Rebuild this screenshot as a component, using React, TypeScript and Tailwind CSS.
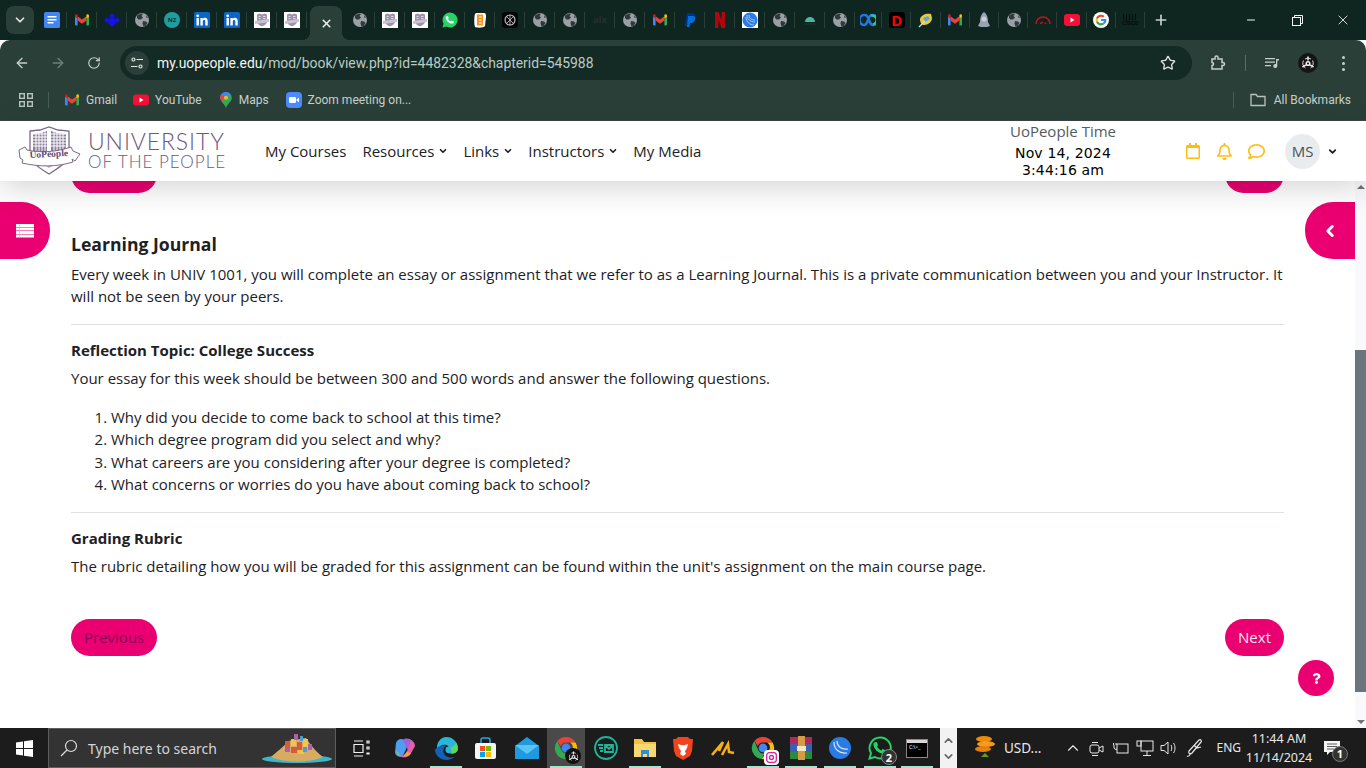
import { ArrowLeft, ArrowRight, ChevronDown, ChevronLeft, ChevronUp, Minus, Plus, RotateCw, Star, X } from 'lucide-react';
import { FaQuestion, FaRegBell, FaRegCalendar, FaRegComment } from 'react-icons/fa';
import type { ReactNode } from 'react';

const Gmail = ({ s = 16 }: { s?: number }) => (
  <svg width={s} height={s} viewBox="0 0 16 16">
    <path d="M1 13.500V4l2.600 1.600v7.900H2a1 1 0 0 1-1-1z" fill="#4285f4" />
    <path d="M15 13.500V4l-2.600 1.600v7.900H14a1 1 0 0 0 1-1z" fill="#34a853" />
    <path d="M3.600 8.600V4.200L8 7.600l4.400-3.400v4.400L8 11.800z" fill="#ea4335" />
    <path d="M1 5V3.800c0-1.200 1.400-1.900 2.400-1.100l.2.2v3.400z" fill="#c5221f" />
    <path d="M15 5V3.800c0-1.200-1.400-1.900-2.400-1.100l-.2.2v3.400z" fill="#fbbc04" />
  </svg>
);

const Globe = () => (
  <svg width="16" height="16" viewBox="0 0 16 16">
    <circle cx="8" cy="8" r="7" fill="#9aa0a6" />
    <path d="M3 3.500c2-1.500 4-2 6-1.600L7.500 4 9 5.500 7 7.500H4.500L3 6zM9 9l3 .5 1.500 1.500-2 3-2 .5-1-3zM12 3l2 2.500-1.500.5z" fill="#2f3a38" />
  </svg>
);

const LinkedIn = () => (
  <svg width="16" height="16" viewBox="0 0 16 16">
    <rect width="16" height="16" rx="1.500" fill="#0a66c2" />
    <rect x="2.500" y="6" width="2.400" height="7.500" fill="#fff" />
    <circle cx="3.700" cy="3.800" r="1.400" fill="#fff" />
    <path d="M6.400 6h2.300v1.100c.5-.8 1.300-1.300 2.300-1.300 2 0 2.700 1.300 2.700 3.300v4.400h-2.400V9.600c0-1-.3-1.600-1.200-1.600S8.800 8.700 8.800 9.600v3.900H6.400z" fill="#fff" />
  </svg>
);

const Crest = () => (
  <svg width="16" height="16" viewBox="0 0 16 16">
    <rect width="16" height="16" fill="#fff" />
    <path d="M3 2.500l2.500-1L8 2.500l2.500-1 2.500 1v7c0 2.500-3 4-5 5-2-1-5-2.500-5-5z" fill="#9d93aa" />
    <path d="M4.500 4h2v1h-2zM9 4h2.500v1H9zM4.500 6h2v1h-2zM9 6h2.500v1H9z" fill="#dcd7e2" />
    <path d="M1 9l14-2v3L1 12z" fill="#c9c3d1" />
  </svg>
);

const Chrome = ({ s = 22 }: { s?: number }) => (
  <svg width={s} height={s} viewBox="0 0 24 24">
    <path d="M12 1a11 11 0 0 1 9.530 5.500H12a5.500 5.500 0 0 0-5.200 3.700L3.400 5A11 11 0 0 1 12 1z" fill="#ea4335" />
    <path d="M3.400 5l4.200 9.800a5.500 5.500 0 0 0 6.200 2.400L10.500 23A11 11 0 0 1 3.400 5z" fill="#34a853" />
    <path d="M21.530 6.500A11 11 0 0 1 10.500 23l4.800-6.600a5.500 5.500 0 0 0 .9-9.900z" fill="#fbbc04" />
    <circle cx="12" cy="12" r="4.400" fill="#4285f4" />
  </svg>
);

const GoogleG = () => (
  <svg width="16" height="16" viewBox="0 0 16 16">
    <circle cx="8" cy="8" r="8" fill="#fff" />
    <path d="M13.400 8.100c0-.4 0-.8-.1-1.100H8v2.100h3a2.600 2.600 0 0 1-1.100 1.700l1.700 1.300c1.100-.9 1.800-2.300 1.800-4z" fill="#4285f4" />
    <path d="M8 13.500c1.500 0 2.700-.5 3.600-1.400l-1.700-1.300c-.5.300-1.100.5-1.900.5a3.300 3.300 0 0 1-3.100-2.300L3.100 10.300A5.500 5.500 0 0 0 8 13.500z" fill="#34a853" />
    <path d="M4.900 9a3.300 3.300 0 0 1 0-2L3.100 5.700a5.500 5.500 0 0 0 0 4.600z" fill="#fbbc04" />
    <path d="M8 4.700c.8 0 1.500.3 2.100.8l1.500-1.500A5.500 5.500 0 0 0 3.100 5.700L4.900 7A3.300 3.300 0 0 1 8 4.700z" fill="#ea4335" />
  </svg>
);

const WhatsApp = ({ s = 16 }: { s?: number }) => (
  <svg width={s} height={s} viewBox="0 0 16 16">
    <path d="M8 .5a7.500 7.500 0 0 0-6.400 11.300L.5 15.500l3.800-1A7.500 7.500 0 1 0 8 .5z" fill="#25d366" />
    <path d="M5.400 3.900c.3 0 .5 0 .6.400l.6 1.400c.1.200 0 .4-.1.600l-.5.600c.6 1.200 1.600 2.100 2.900 2.700l.7-.8c.2-.2.400-.2.600-.1l1.400.7c.3.100.3.300.3.500 0 1.100-1.100 1.800-2 1.700-3-.3-6-3-6.300-5.900-.1-1 .7-1.800 1.800-1.800z" fill="#fff" />
  </svg>
);

const Docs = () => (
  <svg width="16" height="16" viewBox="0 0 16 16">
    <rect width="16" height="16" rx="1.500" fill="#4285f4" />
    <path d="M3.500 4h9v1.500h-9zM3.500 7h9v1.500h-9zM3.500 10h6v1.500h-6z" fill="#fff" />
  </svg>
);

const Biohazard = ({ s = 14 }: { s?: number }) => (
  <svg width={s} height={s} viewBox="0 0 14 14" fill="none" stroke="#ececec" strokeWidth="1.500">
    <circle cx="7" cy="7.500" r="1.800" />
    <path d="M7 .5v4M1.500 11l3.500-2.200M12.500 11L9 8.800" />
    <path d="M2.500 4.500a5.500 5.500 0 0 0 2 7.500M11.500 4.500a5.500 5.500 0 0 1-2 7.500M4 3a5 5 0 0 1 6 0" strokeWidth=".9" />
  </svg>
);

const TabIcon = ({ children, w = 'w-[30px]' }: { children: ReactNode; w?: string }) => (
  <div className={`relative flex h-full shrink-0 items-center justify-center ${w}`}>
    {children}
    <span className="absolute right-0 top-[12px] h-[16px] w-px bg-[#2b3f39]" />
  </div>
);

const firstTabs: ReactNode[] = [
  <Docs />, <Gmail />,
  <svg width="16" height="16" viewBox="0 0 16 16"><path d="M8 1l3 3-2 2 2 1 2-2 3 3-3 3-2-1 0 2-3 3-3-3 0-2-2 1-3-3 3-3 2 2 2-1-2-2z" fill="#1212e6" /></svg>,
  <Globe />,
  <span className="flex h-4 w-4 items-center justify-center rounded-full bg-[#1f9e9e] text-[6px] font-bold text-[#12332e]">NZ</span>,
  <LinkedIn />, <LinkedIn />, <Crest />, <Crest />,
];

const secondTabs: ReactNode[] = [
  <Globe />, <Crest />, <Crest />, <WhatsApp />,
  <svg width="16" height="16" viewBox="0 0 16 16"><path d="M4 1h8c2 0 2 2 2 4l-1 9c-1 2-8 2-10 1-1-3-1-10 0-13z" fill="#fff" /><path d="M5 2.500h6v11H5z" fill="#f7941d" /><path d="M7 5h2.500M7 8h2.500M7 11h2.500" stroke="#fff" strokeWidth="1" /></svg>,
  <svg width="16" height="16" viewBox="0 0 16 16"><rect width="16" height="16" rx="3" fill="#050505" /><circle cx="8" cy="8" r="5" fill="none" stroke="#c9c9c9" strokeWidth="1.100" /><path d="M5 5l6 6M11 5l-6 6M8 3v10" stroke="#c9c9c9" strokeWidth=".8" /></svg>,
  <Globe />, <Globe />,
  <span className="text-[9px] font-bold text-[#26302d]">alx</span>,
  <Globe />, <Gmail />,
  <svg width="16" height="16" viewBox="0 0 16 16"><path d="M5 1h5c3 0 4 2 3 4.500S10 9 8 9H6.500L5.500 14H2.500z" fill="#003087" /><path d="M6 4h5c2 0 2.500 1.500 2 3.500S10.500 11 9 11H8l-.7 4H5z" fill="#0070e0" /></svg>,
  <svg width="16" height="16" viewBox="0 0 16 16"><path d="M3 0h3.500l3 8V0H13v16H9.500l-3-8v8H3z" fill="#b1060f" /></svg>,
  <svg width="16" height="16" viewBox="0 0 16 16"><rect width="16" height="16" fill="#fff" /><circle cx="8" cy="8" r="7.500" fill="#2a7be4" /><path d="M5 3c0 4 3 7 8 7M7 3c0 3 2 5 6 5M4 5c0 5 4 8 8 8" stroke="#cfe2fb" strokeWidth=".7" fill="none" /></svg>,
  <Globe />,
  <svg width="16" height="16" viewBox="0 0 16 16"><path d="M3 10a5 5 0 0 1 10 0z" fill="#4db6a0" /><path d="M2 12h12" stroke="#163a33" strokeWidth="1" /></svg>,
  <Globe />,
];

const lastTabs: ReactNode[] = [
  <svg width="16" height="16" viewBox="0 0 16 16"><path d="M5 3a4 4 0 0 0-1 10c2 0 3-2 4-5S10 3 12 3a4 4 0 0 1 1 10c-2 0-3-2-4-5S7 3 5 3z" fill="none" stroke="#1f7ae0" strokeWidth="2.500" /><path d="M11 3.500a4 4 0 0 1 2 9" fill="none" stroke="#31c48d" strokeWidth="2.500" /></svg>,
  <span className="flex h-4 w-4 items-center justify-center rounded-[3px] bg-black text-[15px] font-bold leading-none text-[#f00]">D</span>,
  <svg width="16" height="16" viewBox="0 0 16 16"><path d="M2 7c1-4 6-6 11-5l1 4c0 4-4 7-8 7-2 0-4-2-4-6z" fill="#e8c93a" /><path d="M5 6l5-2 2 3-5 3z" fill="#5aa7d8" /><path d="M1 15l6-6" stroke="#d9d9d9" strokeWidth="1.200" /></svg>,
  <Gmail />,
  <svg width="16" height="16" viewBox="0 0 16 16"><path d="M8 0c3 2 4 6 4 10l2 4-3 1H5l-3-1 2-4c0-4 1-8 4-10z" fill="#98a2b3" /><circle cx="8" cy="7" r="2.500" fill="#c7ced8" /></svg>,
  <Globe />,
  <svg width="16" height="16" viewBox="0 0 16 16"><path d="M1 12a7 7 0 0 1 14 0" fill="none" stroke="#c4151c" strokeWidth="1.600" /><path d="M5 12a3.500 3.500 0 0 1 6 0" fill="none" stroke="#c4151c" strokeWidth="1.300" /><path d="M8 12l3-5" stroke="#111" strokeWidth="1.200" /></svg>,
  <svg width="16" height="16" viewBox="0 0 16 16"><rect y="2" width="16" height="12" rx="3" fill="#f40f37" /><path d="M6.500 5.500v5l4-2.500z" fill="#fff" /></svg>,
  <GoogleG />,
  <span className="flex flex-col items-center leading-none"><span className="h-[6px] w-[15px] bg-[repeating-linear-gradient(90deg,#050d0b_0_1px,transparent_1px_3px)]" /><span className="text-[6.500px] font-bold text-[#050d0b]">cisco</span></span>,
];

const TabStrip = () => (
  <div className="flex h-10 items-end bg-[#0f2620]">
    <div className="ml-[6px] mr-[3px] mt-[6px] flex h-[28px] w-[28px] self-start items-center justify-center rounded-lg bg-[#2b3f39]">
      <ChevronDown size={14} strokeWidth={3} className="text-[#dfe6e3]" />
    </div>
    <div className="flex h-10 items-center">
      {firstTabs.map((icon, i) => <TabIcon key={i}>{icon}</TabIcon>)}
    </div>
    <div className="relative ml-[3px] mr-[3px] flex h-[34px] w-[32px] items-center justify-center rounded-t-lg bg-[#2b3f39]">
      <X size={13} strokeWidth={3} className="text-[#e6ecea]" />
      <span className="absolute bottom-0 left-[-8px] h-2 w-2 bg-[radial-gradient(circle_at_0_0,transparent_8px,#2b3f39_8px)]" />
      <span className="absolute bottom-0 right-[-8px] h-2 w-2 bg-[radial-gradient(circle_at_100%_0,transparent_8px,#2b3f39_8px)]" />
    </div>
    <div className="flex h-10 items-center">
      {secondTabs.map((icon, i) => <TabIcon key={i}>{icon}</TabIcon>)}
    </div>
    <div className="-ml-[2px] flex h-10 items-center">
      {lastTabs.map((icon, i) => <TabIcon key={i} w="w-[29.200px]">{icon}</TabIcon>)}
    </div>
    <div className="flex h-10 w-[32px] items-center justify-center">
      <Plus size={16} strokeWidth={2.500} className="text-[#c8d2ce]" />
    </div>
    <div className="ml-auto flex h-10 items-center text-[#f2f5f4]">
      <div className="flex w-[46px] justify-center"><Minus size={12} /></div>
      <div className="flex w-[46px] justify-center">
        <svg width="11" height="11" viewBox="0 0 11 11" fill="none" stroke="currentColor"><rect x=".5" y="2.500" width="8" height="8" /><path d="M2.500 2.500V.5h8v8H8.500" /></svg>
      </div>
      <div className="flex w-[46px] justify-center"><X size={16} strokeWidth={1.300} /></div>
    </div>
  </div>
);

const Toolbar = () => (
  <div className="flex h-10 items-end rounded-t-[10px] bg-[#2b3f39] pl-[8px] text-[#c5d0cc]">
    <div className="flex h-[34px] items-center">
      <div className="flex w-[28px] justify-center"><ArrowLeft size={16} strokeWidth={2} /></div>
      <div className="ml-[8px] flex w-[28px] justify-center text-[#6f807a]"><ArrowRight size={16} strokeWidth={2} /></div>
      <div className="ml-[8px] flex w-[28px] justify-center"><RotateCw size={14} strokeWidth={2} /></div>
    </div>
    <div className="ml-[12px] flex h-[34px] w-[1072px] items-center rounded-full bg-[#142a24] pl-[5px] pr-[16px]">
      <span className="flex h-[24px] w-[24px] items-center justify-center rounded-full bg-[#2b3f39]">
        <svg width="14" height="14" viewBox="0 0 14 14" fill="none" stroke="#dfe6e3" strokeWidth="1.200"><circle cx="3.500" cy="3.500" r="1.500" /><path d="M6.500 3.500H13M1 10.500h6.500" /><circle cx="10.500" cy="10.500" r="1.500" /></svg>
      </span>
      <span className="ml-[8px] font-['Roboto',sans-serif] text-[13.900px] text-[#bccac5]"><span className="text-[#f1f5f3]">my.uopeople.edu</span>/mod/book/view.php?id=4482328&amp;chapterid=545988</span>
      <Star size={16} strokeWidth={2} className="ml-auto text-[#dde5e2]" />
    </div>
    <div className="flex h-[34px] flex-1 items-center">
      <svg width="18" height="18" viewBox="0 0 18 18" fill="none" stroke="#c5d0cc" strokeWidth="1.500" className="ml-[17px]"><path d="M3 5h3V3.500a1.500 1.500 0 0 1 3 0V5h4v3.500h1a1.500 1.500 0 0 1 0 3h-1V15H3v-3.500a1.500 1.500 0 0 0 0-3z" /></svg>
      <span className="ml-[18px] h-[16px] w-px bg-[#5a6b65]" />
      <svg width="16" height="14" viewBox="0 0 16 14" fill="#c5d0cc" className="ml-[18px]"><path d="M1 2h10v1.300H1zM1 5.500h10v1.300H1zM1 9h6v1.300H1zM12 3h3v1.500h-1.700V10a2 2 0 1 1-1.300-1.900z" /></svg>
      <span className="ml-[18px] flex h-5 w-5 items-center justify-center rounded-full bg-[#151515]">
        <Biohazard />
      </span>
      <span className="ml-[24px] flex flex-col gap-[3px]">
        <i className="block h-[3px] w-[3px] rounded-full bg-[#c5d0cc]" />
        <i className="block h-[3px] w-[3px] rounded-full bg-[#c5d0cc]" />
        <i className="block h-[3px] w-[3px] rounded-full bg-[#c5d0cc]" />
      </span>
    </div>
  </div>
);

const Bookmark = ({ icon, label, cls }: { icon: ReactNode; label: string; cls: string }) => (
  <div className={`flex items-center gap-[6px] ${cls}`}>
    {icon}
    <span>{label}</span>
  </div>
);

const BookmarksBar = () => (
  <div className="flex h-[41px] items-center border-b border-[#3a4744] bg-[#2b3f39] pl-[19px] font-['Roboto',sans-serif] text-[12px] text-[#c5d0cc]">
    <svg width="14" height="14" viewBox="0 0 14 14" fill="none" stroke="#b7c3bf" strokeWidth="1.400"><rect x=".7" y=".7" width="4.600" height="4.600" /><rect x="8.700" y=".7" width="4.600" height="4.600" /><rect x=".7" y="8.700" width="4.600" height="4.600" /><rect x="8.700" y="8.700" width="4.600" height="4.600" /></svg>
    <span className="ml-[15px] h-[16px] w-px bg-[#4c5d57]" />
    <Bookmark cls="ml-[15px]" icon={<Gmail />} label="Gmail" />
    <Bookmark cls="ml-[16px]" icon={<svg width="16" height="16" viewBox="0 0 16 16"><rect y="2.500" width="16" height="11" rx="3" fill="#f40f37" /><path d="M6.500 5.500v5l4-2.500z" fill="#fff" /></svg>} label="YouTube" />
    <Bookmark cls="ml-[17px]" icon={<svg width="14" height="16" viewBox="0 0 14 18"><path d="M7 0a6.500 6.500 0 0 1 6.500 6.500C13.500 11 8 14 7 18 6 14 .5 11 .5 6.500A6.500 6.500 0 0 1 7 0z" fill="#34a853" /><path d="M7 0a6.500 6.500 0 0 1 5.500 3L3 10C1.500 8.500.5 8 .5 6.500A6.500 6.500 0 0 1 7 0z" fill="#4285f4" /><path d="M2 2.500L5 5 3 10C1.500 8.500.5 8 .5 6.500 .5 5 1 3.500 2 2.500z" fill="#ea4335" /><circle cx="7" cy="6.500" r="2.300" fill="#fbbc04" /></svg>} label="Maps" />
    <Bookmark cls="ml-[17px]" icon={<svg width="16" height="16" viewBox="0 0 16 16"><rect width="16" height="16" rx="4" fill="#4a8cff" /><rect x="3" y="5" width="7" height="6" rx="1.300" fill="#fff" /><path d="M10.500 7.500l2.500-2v5l-2.500-2z" fill="#fff" /></svg>} label="Zoom meeting on..." />
    <span className="ml-auto h-[16px] w-px bg-[#4c5d57]" />
    <div className="ml-[16px] mr-[15px] flex items-center gap-[8px]">
      <svg width="16" height="14" viewBox="0 0 16 14" fill="none" stroke="#b7c3bf" strokeWidth="1.300"><path d="M1 12.500V1.500h5l1.500 2H15v9z" /></svg>
      <span>All Bookmarks</span>
    </div>
  </div>
);

const LogoCrest = () => (
  <svg width="63" height="50" viewBox="0 0 63 50" className="shrink-0">
    <path d="M12 5l10-1 9-3 9 3 11 1v22c0 9-11 15-20 21C21 42 12 36 12 27z" fill="#fff" stroke="#7a6a8c" strokeWidth="1.300" />
    <path d="M15 8l8-1 6-2v20H15zM33 5l6 2 9 1v17H33z" fill="#8d7f9e" />
    <path d="M15 8h33M15 11h33M15 14h33M15 17h33M15 20h33M18 5v22M21 5v22M24 5v22M27 5v22M36 5v22M39 5v22M42 5v22M45 5v22" stroke="#fff" strokeWidth="1" />
    <path d="M18 34l13 8 14-8v-4H18z" fill="#bcb2c8" />
    <path d="M1 24l6-3 2 3c14 3 30 2 44-3l2 4 7 3-5 7-3-2 1 3c-16 5-34 5-51 1l1-3-3-2z" fill="#fff" stroke="#7a6a8c" strokeWidth="1" />
    <text x="31" y="31" textAnchor="middle" fontFamily="Liberation Serif, serif" fontWeight="700" fontSize="9.500" fill="#5c4a70" transform="rotate(-3 31 31)">UoPeople</text>
  </svg>
);

const NavItem = ({ label, caret, cls }: { label: string; caret?: boolean; cls: string }) => (
  <div className={`flex items-center gap-[4px] text-[15px] text-[#1d2125] ${cls}`}>
    <span>{label}</span>
    {caret && <ChevronDown size={10} strokeWidth={4} />}
  </div>
);

const SiteHeader = () => (
  <header className="relative z-10 flex h-[60px] shrink-0 items-center bg-white pl-[18px] font-['Open_Sans',sans-serif] shadow-[0_8px_30px_rgba(0,0,0,0.16)]">
    <LogoCrest />
    <div className="ml-[7px] flex w-[140px] flex-col text-[#6a5880]">
      <span className="text-[23px] font-light leading-[22px] tracking-[0.9px] font-['Lato',sans-serif]">UNIVERSITY</span>
      <span className="text-[17px] font-light leading-[20px] tracking-[1px] font-['Lato',sans-serif]">OF THE PEOPLE</span>
    </div>
    <nav className="ml-[37px] flex items-center">
      <NavItem label="My Courses" cls="" />
      <NavItem label="Resources" caret cls="ml-[16px]" />
      <NavItem label="Links" caret cls="ml-[15px]" />
      <NavItem label="Instructors" caret cls="ml-[15px]" />
      <NavItem label="My Media" cls="ml-[15px]" />
    </nav>
    <div className="ml-auto -mt-[2px] flex w-[160px] flex-col items-center leading-none">
      <span className="text-[15px] leading-[20px] text-[#555b60]">UoPeople Time</span>
      <span className="mt-[4px] font-['DejaVu_Sans',sans-serif] text-[14px] leading-[17px] tracking-[0.15px] text-black">Nov 14, 2024</span>
      <span className="font-['DejaVu_Sans',sans-serif] text-[14px] leading-[17px] tracking-[0.15px] text-black">3:44:16 am</span>
    </div>
    <div className="ml-[42px] flex items-center text-[#ffbd12]">
      <FaRegCalendar size={16} />
      <FaRegBell size={17} className="ml-[15px]" />
      <FaRegComment size={17} className="ml-[15px]" />
    </div>
    <div className="ml-[20px] flex h-[35px] w-[35px] items-center justify-center rounded-full bg-[#e9ecef] text-[15px] text-[#4b5157]">MS</div>
    <ChevronDown size={11} strokeWidth={4} className="ml-[7px] mr-[28px] text-[#1d2125]" />
  </header>
);

const NavButton = ({ label, muted }: { label: string; muted?: boolean }) => (
  <span className={`inline-flex h-[37px] items-center rounded-full bg-[#ea0070] px-[13px] text-[15px] ${muted ? 'text-[#8a0058]' : 'text-[#ffe5f1]'}`}>{label}</span>
);

const Article = () => (
  <main className="flex-1 overflow-hidden pl-[71px] pr-[71px] font-['Open_Sans',sans-serif] text-[15px] leading-[22.500px] text-[#1d2125]">
    <div className="-mt-[25px] flex justify-between">
      <span className="h-[37px] w-[86px] rounded-full bg-[#ea0070]" />
      <span className="h-[37px] w-[59px] rounded-full bg-[#ea0070]" />
    </div>
    <h2 className="mt-[38px] text-[17.600px] font-bold leading-[27px] text-[#1d2125]">Learning Journal</h2>
    <p className="mt-[4.750px]">Every week in UNIV 1001, you will complete an essay or assignment that we refer to as a Learning Journal. This is a private communication between you and your Instructor. It will not be seen by your peers.</p>
    <hr className="mt-[16.250px] border-[#dee2e6]" />
    <h3 className="mt-[14px] text-[15px] font-bold leading-[22.500px]">Reflection Topic: College Success</h3>
    <p className="mt-[5px]">Your essay for this week should be between 300 and 500 words and answer the following questions.</p>
    <ol className="mt-[16.750px] list-decimal pl-[40px]">
      <li>Why did you decide to come back to school at this time?</li>
      <li>Which degree program did you select and why?</li>
      <li>What careers are you considering after your degree is completed?</li>
      <li>What concerns or worries do you have about coming back to school?</li>
    </ol>
    <hr className="mt-[16.250px] border-[#dee2e6]" />
    <h3 className="mt-[14px] text-[15px] font-bold leading-[22.500px]">Grading Rubric</h3>
    <p className="mt-[5px]">The rubric detailing how you will be graded for this assignment can be found within the unit's assignment on the main course page.</p>
    <div className="mt-[42px] flex justify-between">
      <NavButton label="Previous" muted />
      <NavButton label="Next" />
    </div>
  </main>
);

const Scrollbar = () => (
  <div className="flex w-[11px] shrink-0 flex-col items-center bg-[#f8f9fa]">
    <span className="mt-[4px] h-0 w-0 border-x-[4px] border-b-[4px] border-x-transparent border-b-[#6c757d]" />
    <span className="mt-[161px] h-[342px] w-full bg-[#6c757d]" />
    <span className="mt-auto mb-[4px] h-0 w-0 border-x-[4px] border-t-[4px] border-x-transparent border-t-[#6c757d]" />
  </div>
);

const TaskIcon = ({ children, run, active, w }: { children: ReactNode; run?: boolean; active?: boolean; w: string }) => (
  <div className={`relative flex h-10 shrink-0 items-center justify-center ${w} ${active ? 'bg-[#4a4a4a]' : ''}`}>
    {children}
    {run && <span className="absolute bottom-0 left-1/2 h-[2px] w-[32px] -translate-x-1/2 bg-[#9be8cf]" />}
  </div>
);

const Island = () => (
  <svg width="72" height="36" viewBox="0 0 72 36" className="absolute left-[212px] top-[1px]">
    <ellipse cx="36" cy="29" rx="35" ry="4" fill="#3fb6c6" />
    <path d="M10 27c5-5 12-9 17-16l18-3c4 6 9 13 17 19-14 6-38 6-52 0z" fill="#d8ab62" />
    <path d="M24 11h5v8h-5zM36 12h5v8h-5zM30 17h6v6h-6z" fill="#d9593d" />
    <path d="M30 9h5v7h-5zM42 9h5v8h-5zM37 20h6v4h-6z" fill="#e9c94c" />
    <path d="M33 4h4v6h-4zM47 14h4v6h-4zM24 18h5v4h-5z" fill="#b35fa8" />
    <path d="M39 6h3v5h-3zM42 17h4v5h-4z" fill="#4f9bd1" />
  </svg>
);

const Taskbar = () => (
  <footer className="flex h-10 shrink-0 items-center bg-[#1c1c1c] font-['Noto_Sans',sans-serif] text-[#e8e8e8]">
    <div className="flex w-[48px] shrink-0 justify-center">
      <svg width="17" height="17" viewBox="0 0 17 17" fill="#fff"><path d="M0 2.400L7 1.400v6.500H0zM8 1.300L17 0v7.900H8zM0 9h7v6.500L0 14.600zM8 9h9v8L8 15.700z" /></svg>
    </div>
    <div className="relative flex h-10 w-[288px] shrink-0 items-center border border-[#5e5e5e] bg-[#333] pl-[11px]">
      <svg width="18" height="18" viewBox="0 0 18 18" fill="none" stroke="#dcdcdc" strokeWidth="1.200"><circle cx="11" cy="7" r="5.500" /><path d="M7 11l-6 6" /></svg>
      <span className="ml-[10px] text-[14px] text-[#d5d5d5]">Type here to search</span>
      <Island />
    </div>
    <div className="ml-[5px] flex items-center">
      <TaskIcon w="w-[40px]">
        <svg width="17" height="17" viewBox="0 0 17 17" fill="none" stroke="#f0f0f0" strokeWidth="1.200"><path d="M1 1h9M1 16h9M1 4.500h9v8H1zM14 1h2v2h-2zM14 7h2v2h-2zM14 13h2v1h-2z" /></svg>
      </TaskIcon>
      <TaskIcon w="w-[48px]">
        <svg width="24" height="24" viewBox="0 0 24 24"><path d="M3 7c1-4 6-5 8-3l3 7-4 9c-3 2-8 0-8-4z" fill="#4f9df0" /><path d="M10 4c2-2 7-2 9 1l-4 9z" fill="#a25fe0" /><path d="M6 20c3 2 8 2 11-1l5-9c0-3-2-5-4-6l-3 9-4 7z" fill="#e85fa5" /><path d="M3 14l5 6-4-1z" fill="#7cc94a" /><path d="M10 20c3 1 6 0 8-3l-4-1z" fill="#f7a23b" /></svg>
      </TaskIcon>
      <TaskIcon w="w-[34px]" run>
        <svg width="25" height="25" viewBox="0 0 24 24"><path d="M12 1a11 11 0 0 1 11 11c0 3-3 5-6 5-4 0-6-1-6-4 0-2 1-3 3-3-2-3-9-2-11 3-1-6 3-12 9-12z" fill="#29b6d8" /><path d="M1 13c0 6 5 10 11 10 3 0 6-1 8-3-5 2-11 0-11-6 0-2 1-4 3-5-6 0-10 2-11 4z" fill="#1460b8" /><path d="M17 17c3 0 6-2 6-5 0-2-1-4-2-6-1 4-4 5-6 5 2 1 2 4 2 6z" fill="#5cd65c" /></svg>
      </TaskIcon>
      <TaskIcon w="w-[44px]">
        <svg width="23" height="23" viewBox="0 0 23 23"><path d="M7 6V3a2 2 0 0 1 2-2h5a2 2 0 0 1 2 2v3" fill="none" stroke="#29a7e0" strokeWidth="1.500" /><rect x="1" y="6" width="21" height="16" rx="2" fill="#f5f5f5" /><rect x="6" y="9" width="5" height="5" fill="#f25022" /><rect x="12" y="9" width="5" height="5" fill="#7fba00" /><rect x="6" y="15" width="5" height="5" fill="#00a4ef" /><rect x="12" y="15" width="5" height="5" fill="#ffb900" /></svg>
      </TaskIcon>
      <TaskIcon w="w-[40px]">
        <svg width="24" height="24" viewBox="0 0 24 24"><path d="M12 1l12 9v13H0V10z" fill="#1f9ae0" /><path d="M0 9h24l-12 9z" fill="#5cc4f5" /></svg>
      </TaskIcon>
      <TaskIcon w="w-[38px]" run active>
        <Chrome s={24} />
        <span className="absolute bottom-[4px] right-[4px] flex h-[16px] w-[16px] items-center justify-center rounded-full bg-[#111]">
          <Biohazard s={11} />
        </span>
      </TaskIcon>
      <TaskIcon w="w-[42px]">
        <svg width="24" height="24" viewBox="0 0 24 24" fill="none" stroke="#1fb39a" strokeWidth="1.800"><circle cx="12" cy="12" r="11" /><path d="M11 9h8v7h-8zM11 9l4 4 4-4M4 9h5M5 12h4M6 15h3" /></svg>
      </TaskIcon>
      <TaskIcon w="w-[36px]" run>
        <svg width="24" height="24" viewBox="0 0 24 24"><path d="M1 3h8l2 3h12v15H1z" fill="#f3c33f" /><path d="M1 8h22v13H1z" fill="#f8d775" /><path d="M8 14h8v7h-2v-3h-4v3H8z" fill="#2e8fd8" /></svg>
      </TaskIcon>
      <TaskIcon w="w-[40px]">
        <svg width="22" height="25" viewBox="0 0 22 25"><path d="M6 1h10l2 2h3l-1 12-2 5-7 4-7-4-2-5L1 3h3z" fill="#f1441e" /><path d="M6 8l3 1h4l3-1-1 4-2 3 1 3-3 2-3-2 1-3-2-3z" fill="#fff" /></svg>
      </TaskIcon>
      <TaskIcon w="w-[40px]">
        <svg width="24" height="16" viewBox="0 0 24 16" fill="none" stroke="#f5b014" strokeWidth="2.600"><path d="M1 15L12 2 8 11M11 15L17 4l1 8 5 1" /></svg>
      </TaskIcon>
      <TaskIcon w="w-[40px]" run>
        <Chrome s={24} />
        <span className="absolute bottom-[3px] right-[4px] flex h-[15px] w-[15px] items-center justify-center rounded-[4px] bg-white">
          <svg width="11" height="11" viewBox="0 0 11 11" fill="none" stroke="#d6249f" strokeWidth="1.300"><rect x=".7" y=".7" width="9.600" height="9.600" rx="2.500" /><circle cx="5.500" cy="5.500" r="2" /></svg>
        </span>
      </TaskIcon>
      <TaskIcon w="w-[36px]" run>
        <svg width="24" height="24" viewBox="0 0 24 24"><rect x="1" y="1" width="22" height="7" fill="#b3265e" /><rect x="1" y="8" width="22" height="8" fill="#3c5fb5" /><rect x="1" y="16" width="22" height="7" fill="#2c8a3f" /><rect x="9" y="0" width="7" height="24" fill="#d89a45" /><rect x="8" y="10" width="9" height="5" fill="#f5e7c0" /></svg>
      </TaskIcon>
      <TaskIcon w="w-[42px]" run>
        <svg width="24" height="24" viewBox="0 0 24 24"><circle cx="12" cy="12" r="11" fill="#2a7be4" /><path d="M6 6c0 7 5 12 13 11M9 5c0 5 4 9 11 8" stroke="#d6e6fb" strokeWidth="1.200" fill="none" /></svg>
      </TaskIcon>
      <TaskIcon w="w-[38px]" run>
        <svg width="24" height="24" viewBox="0 0 16 16" fill="none"><path d="M8 1a7 7 0 0 0-6 10.500L1 15l3.600-1A7 7 0 1 0 8 1z" stroke="#25d366" strokeWidth="1.300" /><path d="M5.400 4c.3 0 .5 0 .6.400l.6 1.400c.1.200 0 .4-.1.600l-.5.600c.6 1.200 1.600 2.100 2.900 2.700l.7-.8c.2-.2.400-.2.600-.1l1.400.7c.3.100.3.300.3.500 0 1.100-1.100 1.800-2 1.700-3-.3-6-3-6.300-5.900-.1-1 .7-1.800 1.800-1.800z" fill="#25d366" /></svg>
        <span className="absolute bottom-[3px] right-[2px] flex h-[16px] w-[16px] items-center justify-center rounded-full border border-[#888] bg-[#333] text-[11px] font-bold leading-none text-white">2</span>
      </TaskIcon>
      <TaskIcon w="w-[36px]" run>
        <span className="relative block h-[19px] w-[22px] border border-[#888] bg-black">
          <span className="absolute left-0 right-0 top-0 h-[3px] bg-[#d8d8d8]" />
          <span className="absolute left-[2px] top-[5px] text-[5px] leading-none text-white">C:\&gt;_</span>
        </span>
      </TaskIcon>
    </div>
    <div className="ml-[5px] flex h-10 w-[17px] shrink-0 flex-col items-center justify-center bg-[#f2f2f2] text-[#666]">
      <ChevronUp size={13} strokeWidth={3} />
      <ChevronDown size={13} strokeWidth={3} className="mt-[3px]" />
    </div>
    <div className="flex flex-1 items-center">
      <svg width="24" height="26" viewBox="0 0 24 26" className="ml-[16px]"><ellipse cx="11" cy="4" rx="8" ry="3" fill="#ee8a10" /><ellipse cx="13" cy="9" rx="9" ry="3" fill="#f59c1a" /><ellipse cx="10" cy="14" rx="8" ry="3" fill="#e6800c" /><path d="M8 22l4-4 4 4z" fill="#5f9e1d" /></svg>
      <span className="ml-[7px] text-[13.500px]">USD...</span>
      <ChevronUp size={18} strokeWidth={1.500} className="ml-[23px]" />
      <svg width="16" height="17" viewBox="0 0 16 17" fill="none" stroke="#e8e8e8" className="ml-[7px]"><rect x="1" y="5" width="9" height="8" rx="2" /><path d="M10 8l4-2v6l-4-2M3 2.500h6M3 15.500h6" /></svg>
      <svg width="17" height="15" viewBox="0 0 17 15" fill="none" stroke="#e8e8e8" className="ml-[7px]"><rect x="5" y="3" width="11" height="9" /><path d="M2 4v3a2 2 0 0 0 3 1M1.500 2v2M4 2v2" /></svg>
      <svg width="18" height="17" viewBox="0 0 18 17" fill="none" stroke="#e8e8e8" className="ml-[7px]"><rect x="5" y="1" width="12" height="10" /><rect x="1" y="1" width="4" height="5" /><path d="M11 11v4M7 15.500h8" /></svg>
      <svg width="18" height="16" viewBox="0 0 18 16" fill="none" stroke="#e8e8e8" className="ml-[6px]"><path d="M1 5.500h3L8 2v12l-4-3.500H1zM11 5c1 2 1 4 0 6M13.500 3c2 3 2 7 0 10" /></svg>
      <svg width="18" height="20" viewBox="0 0 18 20" fill="none" stroke="#e8e8e8" strokeWidth="1.200" className="ml-[8px]"><path d="M3 13L13 2c2-1 3 1 2 2L6 15c-2 2-4 0-3-2zM8 7l3 3 4-1M1 18c2 1 3-1 4-3" /></svg>
      <span className="ml-[12px] text-[12px]">ENG</span>
      <div className="ml-[8px] flex w-[60px] flex-col items-center text-[12.500px] leading-[19px]">
        <span>11:44 AM</span>
        <span>11/14/2024</span>
      </div>
      <div className="relative ml-[15px]">
        <svg width="16" height="15" viewBox="0 0 16 15" fill="#f5f5f5"><path d="M0 0h16v11H6l-3 3v-3H0z" /><path d="M3 3h10M3 5.500h10M3 8h7" stroke="#333" strokeWidth=".8" /></svg>
        <span className="absolute -right-[8px] top-[5px] flex h-[16px] w-[16px] items-center justify-center rounded-full border border-[#777] bg-[#333] text-[11px] font-bold leading-none text-white">1</span>
      </div>
    </div>
  </footer>
);

export default function App() {
  return (
    <div className="flex h-screen w-full flex-col overflow-hidden bg-white">
      <div className="shrink-0">
        <TabStrip />
        <Toolbar />
        <BookmarksBar />
      </div>
      <SiteHeader />
      <div className="relative flex min-h-0 flex-1">
        <Article />
        <Scrollbar />
        {/* floating drawer toggles and help */}
        <button className="absolute left-0 top-[21px] flex h-[57px] w-[50px] items-center justify-center rounded-r-[28px] bg-[#ea0070] text-white">
          <svg width="18" height="14" viewBox="0 0 18 14" fill="#fff">
            <path d="M0 0h18v3H0zM0 3.500h18v3H0zM0 7h18v3H0zM0 10.500h18v3H0z" />
            <path d="M3.500 0v14" stroke="#f59ac4" strokeWidth=".6" />
          </svg>
        </button>
        <button className="absolute right-[11px] top-[21px] flex h-[57px] w-[50px] items-center justify-center rounded-l-[28px] bg-[#ea0070] text-white">
          <ChevronLeft size={18} strokeWidth={4} />
        </button>
        <button className="absolute right-[32px] top-[479px] flex h-[36px] w-[36px] items-center justify-center rounded-full bg-[#ea0070] text-white">
          <FaQuestion size={11} />
        </button>
      </div>
      <Taskbar />
    </div>
  );
}
